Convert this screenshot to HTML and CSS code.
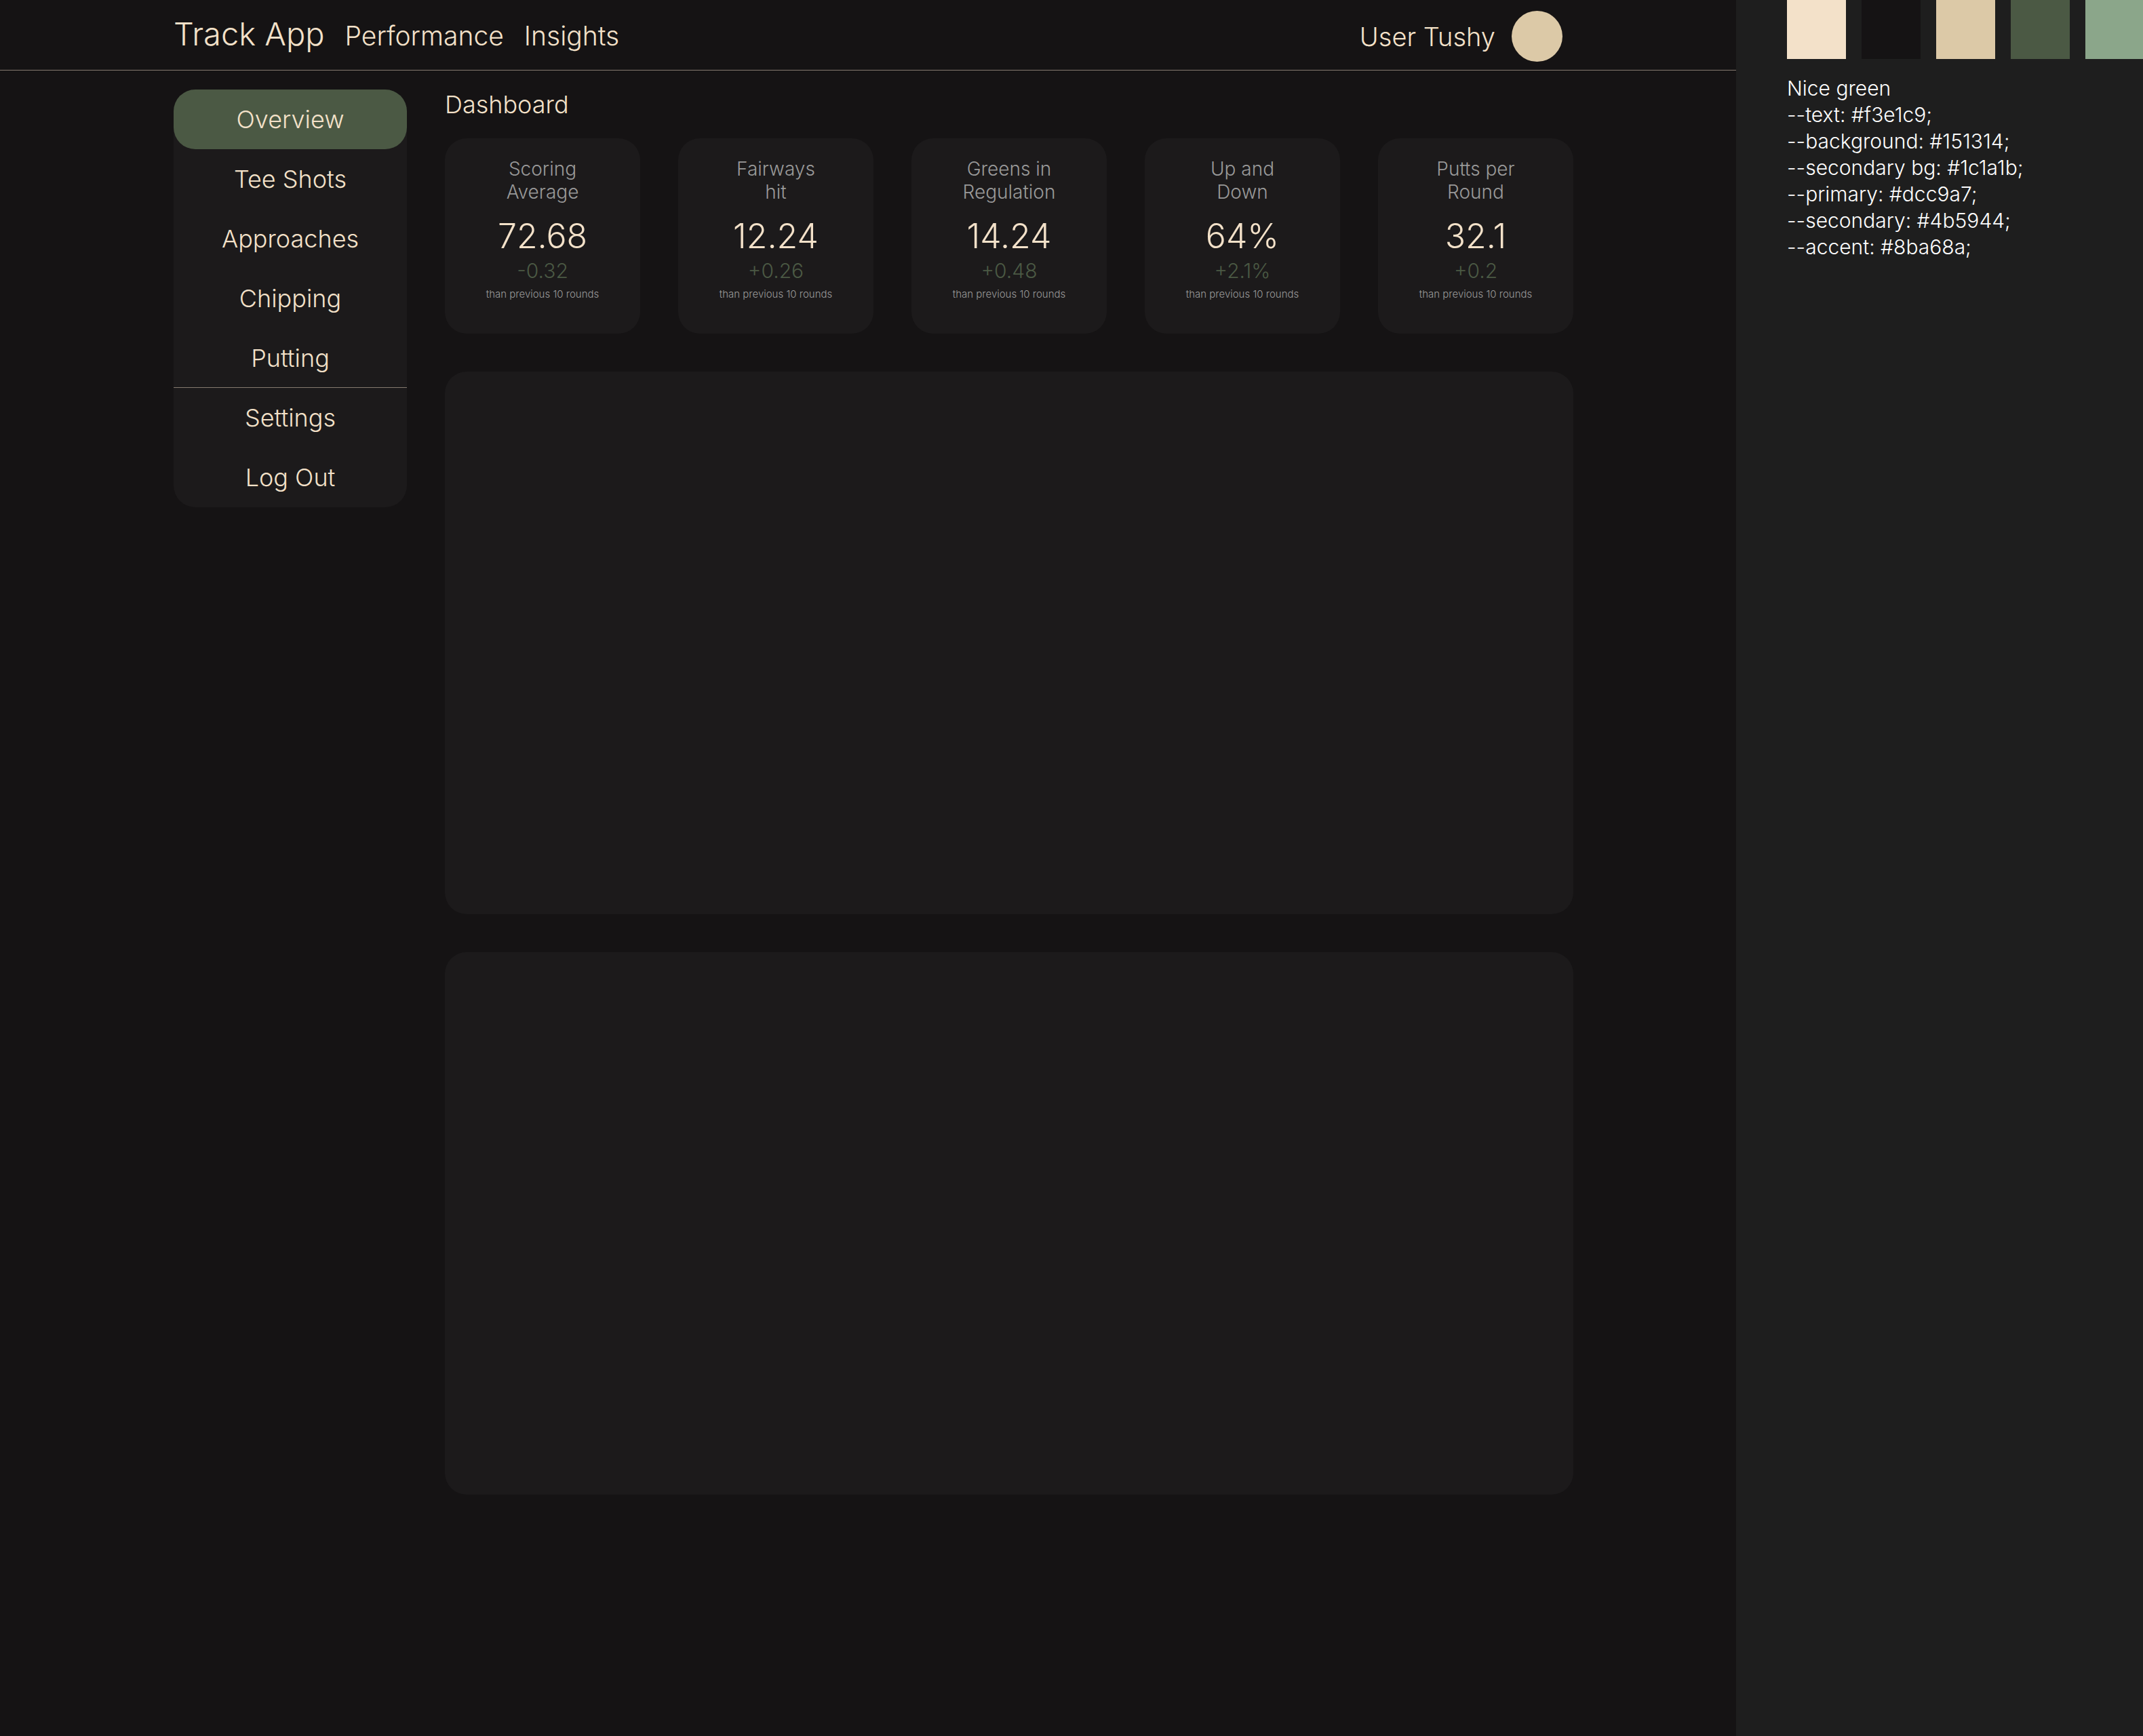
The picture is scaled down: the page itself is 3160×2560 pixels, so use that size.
FILE: index.html
```html
<!DOCTYPE html>
<html lang="en">
<head>
<meta charset="utf-8">
<meta name="viewport" content="width=device-width, initial-scale=1">
<title>Track App</title>
<link rel="stylesheet" href="styles.css">
</head>
<body>
<div class="page">
  <div class="app">
    <header class="header">
      <nav class="topnav" aria-label="Primary">
        <a class="brand" href="#">Track App</a>
        <a class="toplink" href="#">Performance</a>
        <a class="toplink" href="#">Insights</a>
      </nav>
      <a class="user" href="#"><span>User Tushy</span><span class="avatar"></span></a>
    </header>
    <div class="body">
      <nav class="sidebar" aria-label="Sections">
        <a class="item active" href="#">Overview</a>
        <a class="item" href="#">Tee Shots</a>
        <a class="item" href="#">Approaches</a>
        <a class="item" href="#">Chipping</a>
        <a class="item divided" href="#">Putting</a>
        <a class="item" href="#">Settings</a>
        <a class="item" href="#">Log Out</a>
      </nav>
      <main class="main">
        <h1 class="heading">Dashboard</h1>
        <section class="stats">
          <article class="card">
            <h2 class="label">Scoring<br>Average</h2>
            <p class="value">72.68</p>
            <p class="delta">-0.32</p>
            <p class="note">than previous 10 rounds</p>
          </article>
          <article class="card">
            <h2 class="label">Fairways<br>hit</h2>
            <p class="value">12.24</p>
            <p class="delta">+0.26</p>
            <p class="note">than previous 10 rounds</p>
          </article>
          <article class="card">
            <h2 class="label">Greens in<br>Regulation</h2>
            <p class="value">14.24</p>
            <p class="delta">+0.48</p>
            <p class="note">than previous 10 rounds</p>
          </article>
          <article class="card">
            <h2 class="label">Up and<br>Down</h2>
            <p class="value">64%</p>
            <p class="delta">+2.1%</p>
            <p class="note">than previous 10 rounds</p>
          </article>
          <article class="card">
            <h2 class="label">Putts per<br>Round</h2>
            <p class="value">32.1</p>
            <p class="delta">+0.2</p>
            <p class="note">than previous 10 rounds</p>
          </article>
        </section>
        <section class="panel"></section>
        <section class="panel"></section>
      </main>
    </div>
  </div>
  <aside class="palette">
    <div class="swatches">
      <span class="swatch text"></span>
      <span class="swatch background"></span>
      <span class="swatch primary"></span>
      <span class="swatch secondary"></span>
      <span class="swatch accent"></span>
    </div>
    <p class="tokens">Nice green<br>--text: #f3e1c9;<br>--background: #151314;<br>--secondary bg: #1c1a1b;<br>--primary: #dcc9a7;<br>--secondary: #4b5944;<br>--accent: #8ba68a;</p>
  </aside>
</div>
</body>
</html>
```
FILE: styles.css
```css
:root {
  --text: #f3e1c9;
  --background: #151314;
  --secondary-bg: #1c1a1b;
  --primary: #dcc9a7;
  --secondary: #4b5944;
  --accent: #8ba68a;
  --line: #847a6f;
}

* {
  box-sizing: border-box;
}

body {
  margin: 0;
  background: var(--background);
  color: var(--text);
  font-family: Inter, "Liberation Sans", sans-serif;
  font-size: 36px;
  font-weight: 300;
  line-height: 44px;
}

h1, h2, p {
  margin: 0;
  font-weight: 300;
}

a {
  color: inherit;
  text-decoration: none;
}

.page {
  display: grid;
  grid-template-columns: minmax(0, 1fr) 600px;
  min-height: 100vh;
}

.header {
  display: flex;
  justify-content: space-between;
  align-items: flex-start;
  min-height: 104px;
  padding: 16px 256px 0;
  border-bottom: 1px solid var(--line);
}

.topnav {
  display: flex;
  align-items: baseline;
  gap: 30px;
  padding-top: 5px;
}

.brand {
  font-size: 47px;
  line-height: 58px;
}

.toplink {
  font-size: 39px;
}

.user {
  display: flex;
  align-items: center;
  gap: 24px;
  font-size: 38px;
}

.avatar {
  width: 75px;
  height: 75px;
  border-radius: 50%;
  background: var(--primary);
}

.body {
  display: flex;
  align-items: flex-start;
  gap: 56px;
  padding: 28px 240px 56px 256px;
}

.sidebar {
  flex: 0 0 344px;
  border-radius: 32px;
  background: var(--secondary-bg);
}

.item {
  display: flex;
  align-items: center;
  justify-content: center;
  height: 88px;
}

.active {
  border-radius: 32px;
  background: var(--secondary);
}

.divided {
  border-bottom: 1px solid var(--line);
}

.main {
  flex: 1;
  min-width: 0;
}

.heading {
  font-size: 36px;
  margin-bottom: 28px;
}

.stats {
  display: grid;
  grid-template-columns: repeat(5, minmax(0, 1fr));
  gap: 56px;
}

.card {
  min-height: 288px;
  padding: 28px 16px;
  border-radius: 32px;
  background: var(--secondary-bg);
  text-align: center;
}

.label {
  margin-bottom: 16px;
  color: #999;
  font-size: 28px;
  line-height: 34px;
}

.value {
  font-size: 50px;
  line-height: 64px;
}

.delta {
  margin-bottom: 6px;
  color: var(--secondary);
  font-size: 30px;
  line-height: 38px;
}

.note {
  color: #999;
  font-size: 15px;
  line-height: 20px;
}

.panel {
  min-height: 800px;
  margin-top: 56px;
  border-radius: 32px;
  background: var(--secondary-bg);
}

.palette {
  padding-left: 75px;
  background: #1e1e1e;
  color: #fff;
  overflow: hidden;
}

.swatches {
  display: flex;
  gap: 23px;
}

.swatch {
  flex: 0 0 87px;
  height: 87px;
}

.text { background: var(--text); }
.background { background: var(--background); }
.primary { background: var(--primary); }
.secondary { background: var(--secondary); }
.accent { background: var(--accent); }

.tokens {
  margin-top: 24px;
  font-size: 30px;
  line-height: 39px;
}
```
